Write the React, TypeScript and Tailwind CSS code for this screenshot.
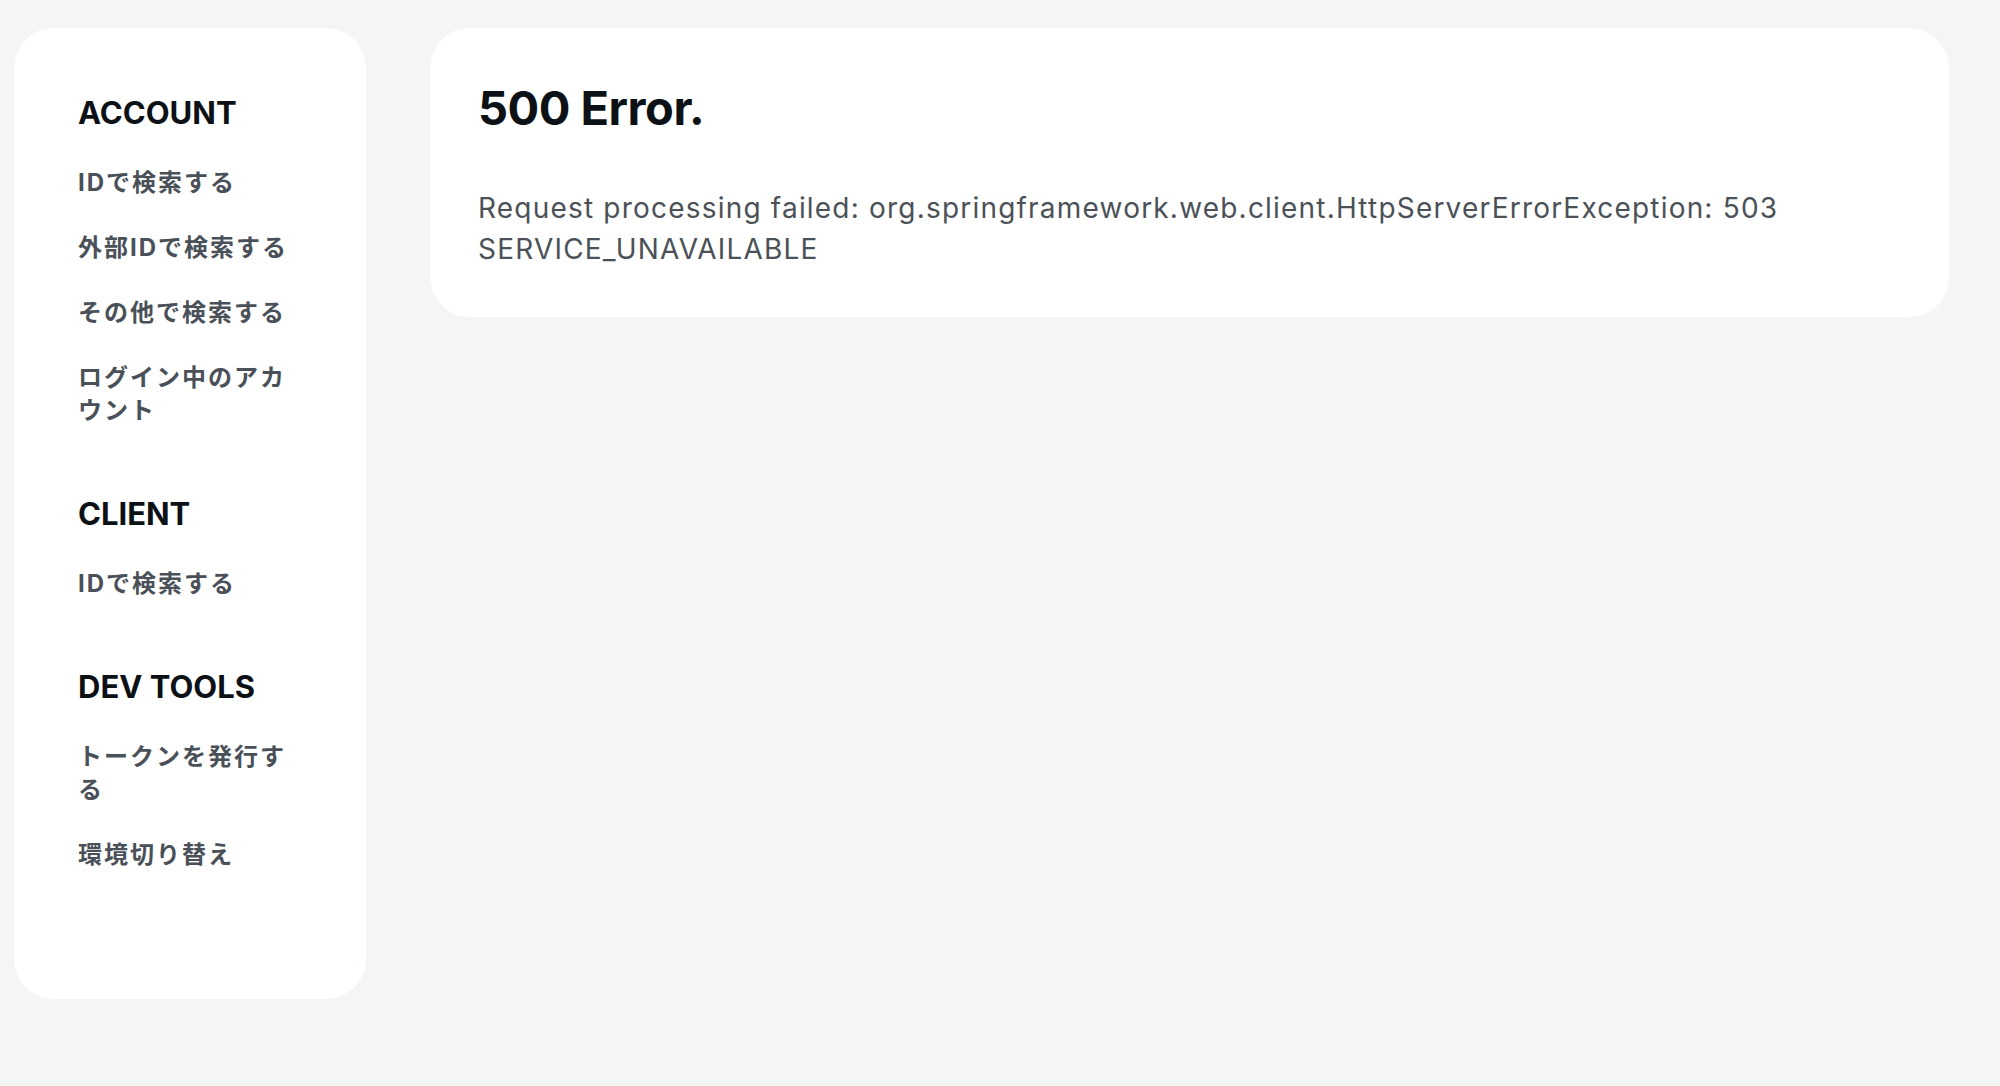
const sections = [
  {
    title: "ACCOUNT",
    items: ["IDで検索する", "外部IDで検索する", "その他で検索する", "ログイン中のアカウント"],
  },
  {
    title: "CLIENT",
    items: ["IDで検索する"],
  },
  {
    title: "DEV TOOLS",
    items: ["トークンを発行する", "環境切り替え"],
  },
];

const font = { fontFamily: 'Inter, "Noto Sans CJK JP", sans-serif' };

export default function App() {
  return (
    <div className="min-h-screen bg-[#f4f6f6] pl-[14px] pr-[51px] pt-[28px] flex items-start gap-[64px]" style={font}>
      {/* Sidebar */}
      <aside className="w-[352px] shrink-0 bg-white rounded-[40px] px-[64px] pt-[64px] pb-[128px] flex flex-col gap-[66px]">
        {sections.map((s) => (
          <div key={s.title} className="flex flex-col gap-[32px]">
            <h2 className="text-[31px] leading-[42px] font-bold text-[#0c1116]">{s.title}</h2>
            {s.items.map((item) => (
              <a
                key={item}
                href="#"
                className="text-[24px] leading-[33px] font-bold text-[#4a5058] tracking-[2px]"
              >
                {item}
              </a>
            ))}
          </div>
        ))}
      </aside>

      {/* Main */}
      <main className="flex-1 bg-white rounded-[40px] px-[48px] pt-[50px] pb-[47px]">
        <h1 className="text-[47px] leading-[60px] font-bold text-[#0c1116] mb-[50px] tracking-[-0.5px]">500 Error.</h1>
        <p className="text-[28px] leading-[41px] text-[#4b5157] tracking-[1.2px]">
          Request processing failed: org.springframework.web.client.HttpServerErrorException: 503 SERVICE_UNAVAILABLE
        </p>
      </main>
    </div>
  );
}
